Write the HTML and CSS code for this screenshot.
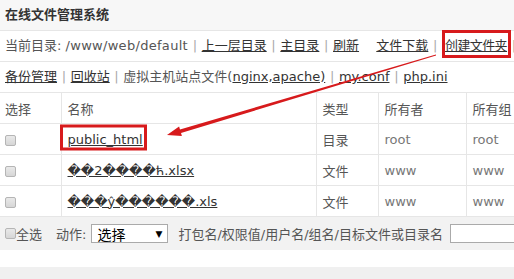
FILE: index.html
```html
<!DOCTYPE html>
<html>
<head>
  <meta charset="utf-8">
  <link rel="stylesheet" href="styles.css">
  <title>在线文件管理系统</title>
</head>
<body>
  <div class="page">
    <div class="title">在线文件管理系统</div>

    <div class="bar">
      当前目录: <span class="path">/www/web/default</span> <span class="sep">|</span>
      <a href="#">上一层目录</a> <span class="sep">|</span>
      <a href="#">主目录</a> <span class="sep">|</span>
      <a href="#">刷新</a>
      <span class="gap"></span>
      <a href="#">文件下载</a> <span class="sep">|</span>
      <a href="#" class="mark-target">创建文件夹</a> <span class="sep">|</span>
    </div>

    <div class="bar">
      <a href="#">备份管理</a> <span class="sep">|</span>
      <a href="#">回收站</a> <span class="sep">|</span>
      虚拟主机站点文件(<a href="#">nginx,apache)</a> <span class="sep">|</span>
      <a href="#">my.conf</a> <span class="sep">|</span>
      <a href="#">php.ini</a>
    </div>

    <table class="files">
      <colgroup>
        <col class="c-check">
        <col class="c-name">
        <col class="c-type">
        <col class="c-owner">
        <col class="c-group">
      </colgroup>
      <thead>
        <tr>
          <th>选择</th>
          <th>名称</th>
          <th>类型</th>
          <th>所有者</th>
          <th>所有组</th>
        </tr>
      </thead>
      <tbody>
        <tr>
          <td><input type="checkbox" class="chk"></td>
          <td><a href="#" class="fname">public_html</a></td>
          <td>目录</td>
          <td class="muted">root</td>
          <td class="muted">root</td>
        </tr>
        <tr>
          <td><input type="checkbox" class="chk"></td>
          <td><a href="#" class="fname">��2����ћ.xlsx</a></td>
          <td>文件</td>
          <td class="muted">www</td>
          <td class="muted">www</td>
        </tr>
        <tr>
          <td><input type="checkbox" class="chk"></td>
          <td><a href="#" class="fname">���ŷ������.xls</a></td>
          <td>文件</td>
          <td class="muted">www</td>
          <td class="muted">www</td>
        </tr>
      </tbody>
    </table>

    <div class="actions">
      <label class="all"><input type="checkbox" class="chk">全选</label>
      <span class="act-label">动作:</span>
      <span class="select"><span>选择</span><span class="caret">▼</span></span>
      <span class="hint">打包名/权限值/用户名/组名/目标文件或目录名</span>
      <input type="text" class="target">
    </div>

    <div class="spacer"></div>
    <div class="foot"></div>

    <!-- 标注层 -->
    <svg class="notes" width="514" height="279" viewBox="0 0 514 279">
      <rect x="443.5" y="31.5" width="66" height="25" fill="none" stroke="#d71a1c" stroke-width="3"/>
      <rect x="61.5" y="126" width="84" height="23" fill="none" stroke="#d71a1c" stroke-width="3"/>
      <polygon fill="#d71a1c" points="436.1,55.6 435.9,54.4 180.0,129.5 179.1,126.4 167,135 181.9,136.0 181.0,132.9"/>
    </svg>
  </div>
</body>
</html>
```

FILE: styles.css
```css
html, body {
  margin: 0;
  padding: 0;
  background: #fff;
  overflow: hidden;
}

.page {
  position: relative;
  width: 514px;
  height: 279px;
  overflow: hidden;
  font-family: "DejaVu Sans", "Noto Sans CJK SC", sans-serif;
  font-size: 13px;
  color: #555;
}

a {
  color: #333;
  text-decoration: underline;
}

/* 标题 */
.title {
  height: 30px;
  line-height: 30px;
  padding: 0 5px;
  background: #f7f7f7;
  border-bottom: 1px solid #e6e6e6;
  color: #333;
  font-weight: bold;
  white-space: nowrap;
}

/* 工具栏 */
.bar {
  height: 30px;
  line-height: 30px;
  padding: 0 5px;
  border-bottom: 1px solid #e6e6e6;
  white-space: nowrap;
}

.path {
  letter-spacing: 0.3px;
}

.sep {
  color: #aaa;
  margin: 0 0.5px;
}

.gap {
  display: inline-block;
  width: 9px;
}

.mark-target {
  margin-left: 3px;
  letter-spacing: -0.6px;
}

/* 文件列表 */
.files {
  width: 600px;
  border-collapse: collapse;
  table-layout: fixed;
}

.c-check { width: 61px; }
.c-name { width: 255px; }
.c-type { width: 62px; }
.c-owner { width: 88px; }

.files th,
.files td {
  height: 30px;
  padding: 0 6px;
  text-align: left;
  font-weight: normal;
  border-bottom: 1px solid #e6e6e6;
  border-left: 1px solid #e6e6e6;
  white-space: nowrap;
}

.files th:first-child,
.files td:first-child {
  border-left: none;
  padding-left: 5px;
}

.files th {
  color: #555;
}

.files td {
  color: #555;
}

.files td.muted {
  color: #777;
}

.fname {
  color: #333;
}

/* 复选框 */
.chk {
  -webkit-appearance: none;
  appearance: none;
  width: 11px;
  height: 11px;
  margin: 0;
  border: 1px solid #b5b5b5;
  border-radius: 2px;
  background: linear-gradient(#e9e9e9, #d6d6d6);
  vertical-align: middle;
}

/* 底部操作栏 */
.actions {
  height: 33px;
  display: flex;
  align-items: center;
  padding-left: 5px;
  background: #f2f2f2;
  white-space: nowrap;
}

.actions > * {
  flex: none;
}

.all {
  display: flex;
  align-items: center;
  color: #555;
}

.act-label {
  margin-left: 14px;
}

.select {
  box-sizing: border-box;
  width: 77px;
  height: 19px;
  margin-left: 5px;
  padding: 0 5px;
  display: inline-flex;
  align-items: center;
  justify-content: space-between;
  background: #fff;
  border: 1px solid #aaa;
  color: #000;
  font-size: 14px;
}

.caret {
  font-size: 9px;
}

.hint {
  margin-left: 10px;
}

.target {
  box-sizing: border-box;
  width: 120px;
  height: 19px;
  margin-left: 7px;
  border: 1px solid #aaa;
}

.spacer {
  height: 17px;
}

.foot {
  height: 18px;
  background: #f0f0f0;
}

/* 标注 */
.notes {
  position: absolute;
  top: 0;
  left: 0;
  pointer-events: none;
}
```
